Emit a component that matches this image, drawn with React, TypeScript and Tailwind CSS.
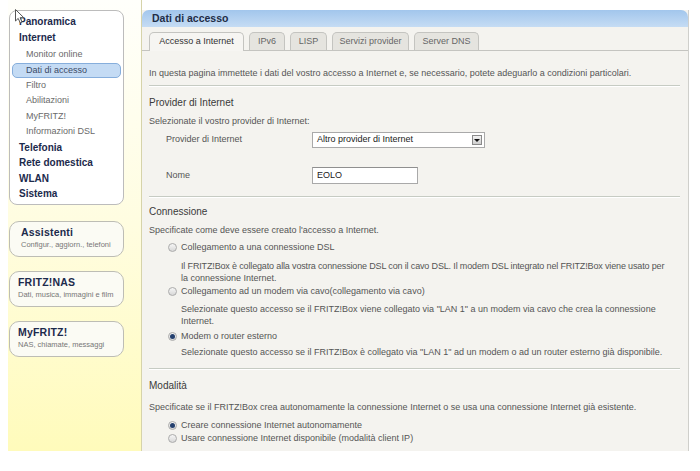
import { type ReactNode } from 'react';

const FONT = { fontFamily: '"Liberation Sans", Arial, sans-serif' };

function Radio({ checked }: { checked?: boolean }) {
    return (
        <span className="w-[9px] h-[9px] rounded-full border border-[#ababab] bg-gradient-to-b from-[#f6f6f6] to-[#d8d8d8] flex items-center justify-center shrink-0">
            {checked && <span className="w-[5px] h-[5px] rounded-full bg-[#24406e]" />}
        </span>
    );
}

function Hr() {
    return <div className="border-t border-[#c6cbc3] border-b border-b-white mr-[8px]" />;
}

function NavBold({ children }: { children: ReactNode }) {
    return <div className="h-[15.5px] leading-[15.5px] pl-[9px] text-[10px] font-bold text-[#1c2a4c]">{children}</div>;
}

function NavSub({ children, active }: { children: ReactNode; active?: boolean }) {
    return (
        <div className={active
            ? "h-[15px] leading-[13px] mx-[2px] pl-[13px] rounded-[5px] border border-[#86aedc] bg-[#c4dbf4] text-[9px] text-[#3a4a66]"
            : "h-[15.5px] leading-[15.5px] pl-[16px] text-[9px] text-[#6a6a6a]"}>
            {children}
        </div>
    );
}

function SideBox({ title, sub, pad }: { title: string; sub: string; pad: string }) {
    return (
        <div className={`h-[36px] w-[115px] rounded-[10px] border border-[#bdbdb5] bg-[#fbfbf4] pt-[4px] ${pad}`}>
            <div className="text-[10.5px] leading-[13px] font-bold text-[#1c2a4c] tracking-[0.2px]">{title}</div>
            <div className="text-[7.5px] leading-[12px] text-[#777]">{sub}</div>
        </div>
    );
}

function Tab({ label, w, active }: { label: string; w: string; active?: boolean }) {
    return (
        <div className={`${w} h-[18px] rounded-t-[5px] border border-b-0 border-[#c4c4c0] flex items-center justify-center text-[9px] ${active
            ? "bg-[#f6f5f2] text-[#333] h-[19px] -mb-px"
            : "bg-[#e5e4df] text-[#666]"}`}>
            {label}
        </div>
    );
}

function Option({ checked, children }: { checked?: boolean; children: ReactNode }) {
    return (
        <div className="flex items-center gap-[4px] leading-[12px]">
            <Radio checked={checked} /><span>{children}</span>
        </div>
    );
}

export default function App() {
    return (
        <div className="relative w-[700px] h-[471px] bg-white flex items-start overflow-hidden" style={FONT}>
            {/* Sidebar */}
            <div className="ml-[8px] w-[134px] h-[451px] bg-gradient-to-b from-[#fffffb] via-[#fffde0] to-[#fffbbb] border-r border-[#d6d3aa] pt-[10px] flex flex-col">
                <div className="w-[115px] h-[195px] ml-px rounded-[8px] border border-[#bcbcbc] bg-white pt-[3px]">
                    <NavBold>Panoramica</NavBold>
                    <NavBold>Internet</NavBold>
                    <div className="h-[2px]" />
                    <NavSub>Monitor online</NavSub>
                    <NavSub active>Dati di accesso</NavSub>
                    <NavSub>Filtro</NavSub>
                    <NavSub>Abilitazioni</NavSub>
                    <NavSub>MyFRITZ!</NavSub>
                    <NavSub>Informazioni DSL</NavSub>
                    <NavBold>Telefonia</NavBold>
                    <NavBold>Rete domestica</NavBold>
                    <NavBold>WLAN</NavBold>
                    <NavBold>Sistema</NavBold>
                </div>
                <div className="ml-px mt-[16px] flex flex-col gap-[14px]">
                    <SideBox title="Assistenti" sub="Configur., aggiorn., telefoni" pad="pl-[11px]" />
                    <SideBox title="FRITZ!NAS" sub="Dati, musica, immagini e film" pad="pl-[8px]" />
                    <SideBox title="MyFRITZ!" sub="NAS, chiamate, messaggi" pad="pl-[8px]" />
                </div>
            </div>

            {/* Main panel */}
            <div className="mt-[10px] w-[547px] h-[441px] bg-[#f4f3ef] border-r border-[#cfcfcb] flex flex-col">
                <div className="h-[17px] rounded-t-[7px] bg-gradient-to-b from-[#a2c6ec] to-[#c5dcf4] pl-[10px] text-[10.5px] leading-[17px] font-bold text-[#1f2d47]">
                    Dati di accesso
                </div>

                <div className="mt-[5px] pl-[7px] flex items-end gap-[5px] border-b border-[#c4c4c0]">
                    <Tab label="Accesso a Internet" w="w-[95px]" active />
                    <Tab label="IPv6" w="w-[36px]" />
                    <Tab label="LISP" w="w-[37px]" />
                    <Tab label="Servizi provider" w="w-[77px]" />
                    <Tab label="Server DNS" w="w-[65px]" />
                </div>

                <div className="pl-[7px] text-[9px] text-[#555] whitespace-nowrap">
                    <div className="mt-[16px] leading-[12px]">
                        In questa pagina immettete i dati del vostro accesso a Internet e, se necessario, potete adeguarlo a condizioni particolari.
                    </div>
                    <div className="mt-[6px]"><Hr /></div>

                    <div className="mt-[9px] text-[10px] leading-[14px] text-[#3a3a3a]">Provider di Internet</div>
                    <div className="mt-[5px] leading-[12px]">Selezionate il vostro provider di Internet:</div>

                    <div className="mt-[5px] flex items-center pl-[17px]">
                        <div className="w-[146px]">Provider di Internet</div>
                        <div className="w-[173px] h-[16px] border border-[#a9a9a9] bg-white flex items-center justify-between pl-[4px] pr-[2px] text-[#222]">
                            <span>Altro provider di Internet</span>
                            <span className="w-[10px] h-[10px] border border-[#8a8a8a] bg-gradient-to-b from-[#f2f2f2] to-[#cfcfcf] flex items-center justify-center">
                                <span className="w-0 h-0 border-l-[3px] border-r-[3px] border-t-[3px] border-l-transparent border-r-transparent border-t-[#111]" />
                            </span>
                        </div>
                    </div>
                    <div className="mt-[19px] flex items-center pl-[17px]">
                        <div className="w-[146px]">Nome</div>
                        <div className="w-[106px] h-[17px] border border-[#a9a9a9] border-t-[#8f8f8f] bg-white pl-[4px] leading-[15px] text-[#222]">EOLO</div>
                    </div>
                    <div className="mt-[12px]"><Hr /></div>

                    <div className="mt-[7px] text-[10px] leading-[14px] text-[#3a3a3a]">Connessione</div>
                    <div className="mt-[5px] leading-[12px]">Specificate come deve essere creato l'accesso a Internet.</div>

                    <div className="pl-[19px]">
                        <div className="mt-[5px]"><Option>Collegamento a una connessione DSL</Option></div>
                        <div className="mt-[7px] pl-[13px] leading-[12px]">
                            <div className="tracking-[-0.15px]">Il FRITZ!Box è collegato alla vostra connessione DSL con il cavo DSL. Il modem DSL integrato nel FRITZ!Box viene usato per</div>
                            <div>la connessione Internet.</div>
                        </div>
                        <div className="mt-[1px]"><Option>Collegamento ad un modem via cavo(collegamento via cavo)</Option></div>
                        <div className="mt-[6px] pl-[13px] leading-[12px]">
                            <div>Selezionate questo accesso se il FRITZ!Box viene collegato via "LAN 1" a un modem via cavo che crea la connessione</div>
                            <div>Internet.</div>
                        </div>
                        <div className="mt-[3px]"><Option checked>Modem o router esterno</Option></div>
                        <div className="mt-[4px] pl-[13px] leading-[12px]">
                            Selezionate questo accesso se il FRITZ!Box è collegato via "LAN 1" ad un modem o ad un router esterno già disponibile.
                        </div>
                    </div>
                    <div className="mt-[10px]"><Hr /></div>

                    <div className="mt-[9px] text-[10px] leading-[14px] text-[#3a3a3a]">Modalità</div>
                    <div className="mt-[8px] leading-[12px]">
                        Specificate se il FRITZ!Box crea autonomamente la connessione Internet o se usa una connessione Internet già esistente.
                    </div>
                    <div className="pl-[19px] mt-[6px] flex flex-col gap-[1px]">
                        <Option checked>Creare connessione Internet autonomamente</Option>
                        <Option>Usare connessione Internet disponibile (modalità client IP)</Option>
                    </div>
                </div>
            </div>

            {/* Mouse cursor */}
            <svg className="absolute left-[15px] top-[9px]" width="10" height="15" viewBox="0 0 10 15">
                <path d="M0.5 0.5 L0.5 12 L3.2 9.4 L5.2 13.8 L7 13 L5.1 8.7 L8.8 8.7 Z" fill="#fff" stroke="#555" strokeWidth="1" strokeLinejoin="round" />
            </svg>
        </div>
    );
}
